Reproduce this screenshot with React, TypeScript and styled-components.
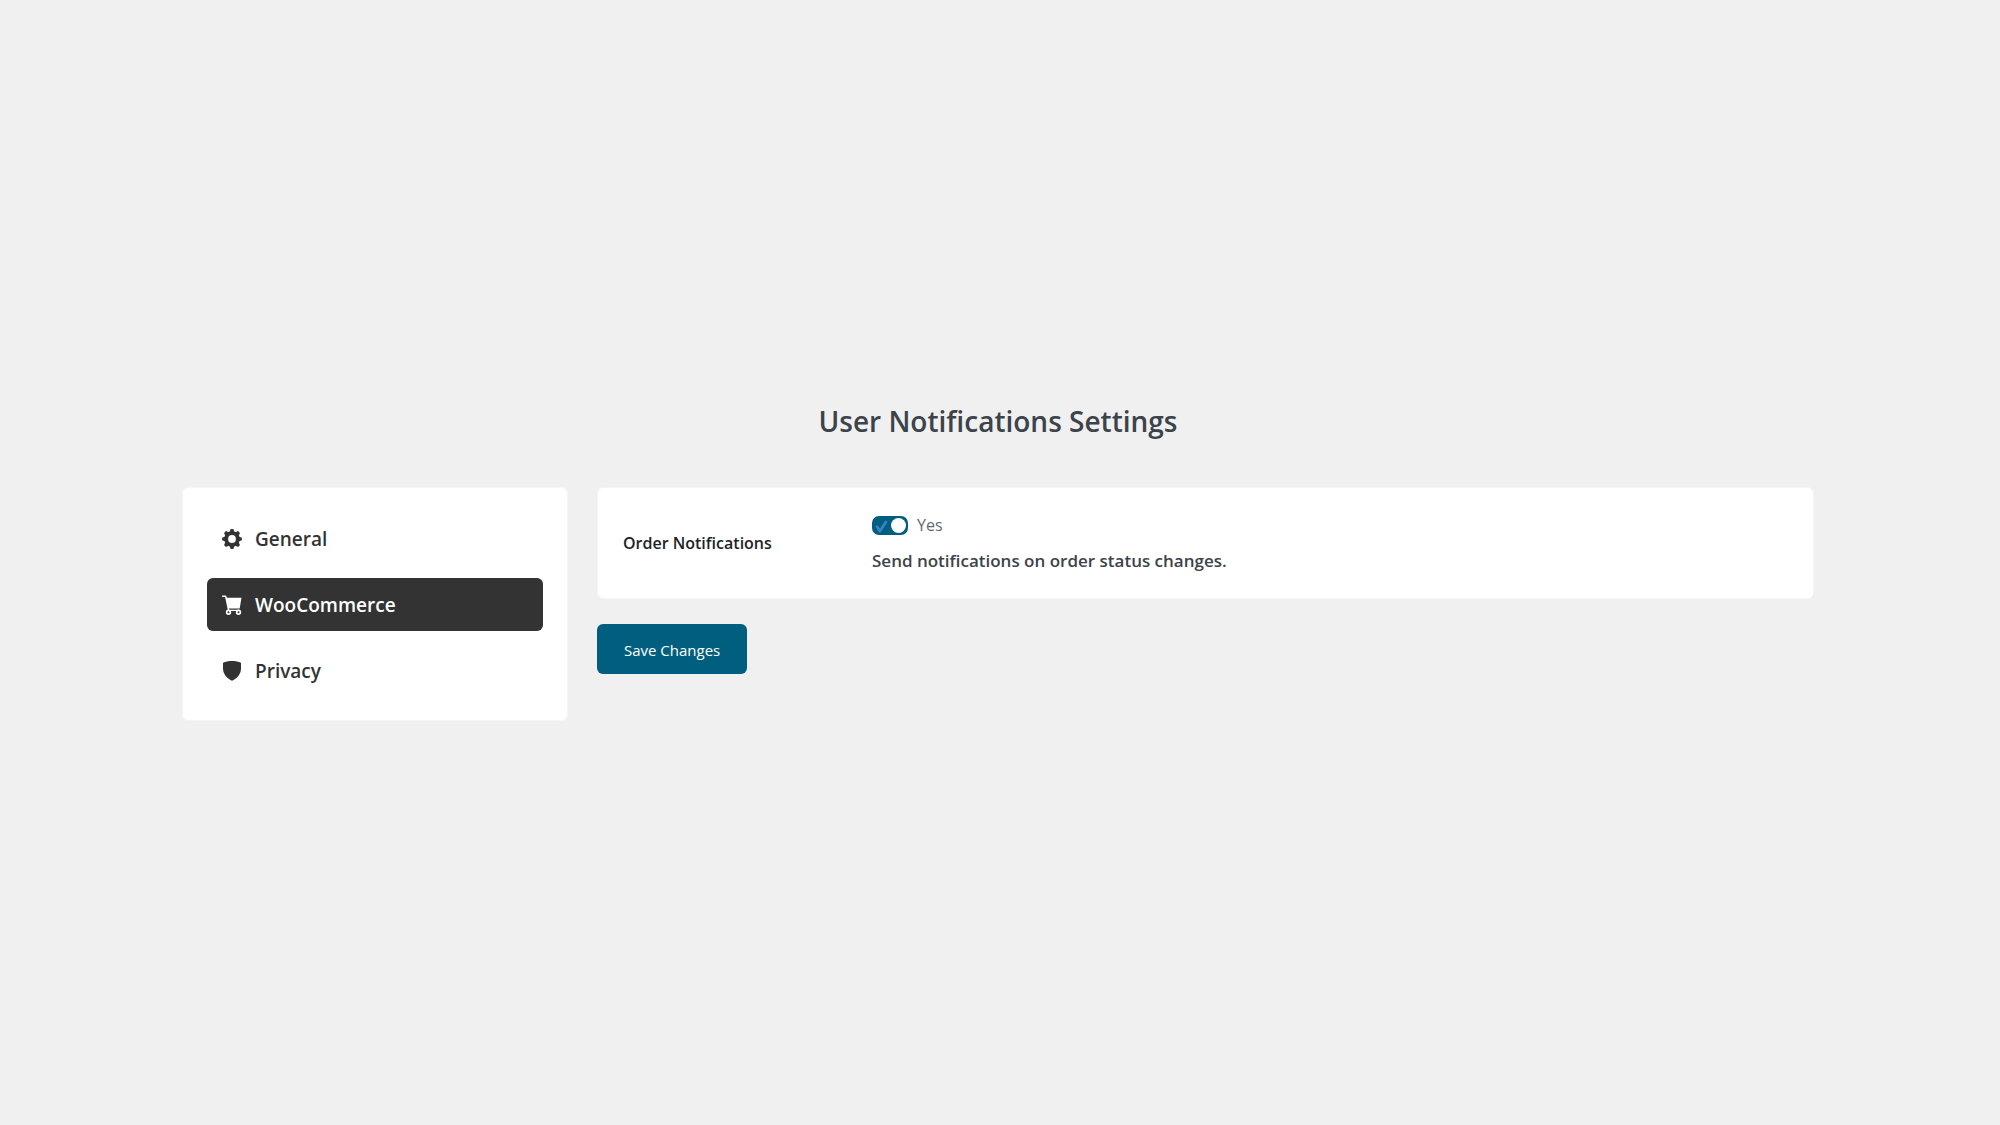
import React, { useState } from "react";
import styled, { createGlobalStyle } from "styled-components";

const GlobalStyle = createGlobalStyle`
  *, *::before, *::after { box-sizing: border-box; }
  body {
    margin: 0;
    background: #f0f0f0;
    color: #3c434a;
    font-family: "Segoe UI", "Open Sans", "Noto Sans", sans-serif;
  }
`;

const Page = styled.main`
  min-height: 100vh;
  padding: 396px 186px 48px 182px;
`;

const Title = styled.h1`
  margin: 0 0 41px;
  font-size: 28px;
  line-height: 50px;
  font-weight: 600;
  text-align: center;
`;

const Layout = styled.div`
  display: grid;
  grid-template-columns: 386px minmax(0, 1fr);
  gap: 29px;
  align-items: start;
`;

const Panel = styled.div`
  padding: 25px;
  background: #fff;
  border: 1px solid #f5f5f5;
  border-radius: 6px;
`;

const NavPanel = styled(Panel)`
  padding: 24px 24px 23px;
`;

const NavList = styled.ul`
  display: flex;
  flex-direction: column;
  gap: 13px;
  margin: 0;
  padding: 0;
  list-style: none;
`;

const NavLink = styled.a<{ $active?: boolean }>`
  display: flex;
  align-items: center;
  gap: 13px;
  height: 53px;
  padding: 0 15px;
  border-radius: 6px;
  background: ${(p) => (p.$active ? "#333" : "transparent")};
  color: ${(p) => (p.$active ? "#fff" : "#333")};
  font-size: 19px;
  line-height: 26px;
  font-weight: 600;
  text-decoration: none;
`;

const NavIcon = styled.svg`
  flex: none;
  width: 20px;
  height: 20px;
  fill: currentColor;
`;

const Form = styled.form`
  display: flex;
  flex-direction: column;
  align-items: flex-start;
  gap: 25px;
`;

const SettingRow = styled(Panel)`
  display: grid;
  grid-template-columns: 249px minmax(0, 1fr);
  align-items: center;
  width: 100%;
`;

const SettingName = styled.span`
  color: #1d2327;
  font-size: 16px;
  line-height: 24px;
  font-weight: 600;
`;

const SettingBody = styled.div`
  display: flex;
  flex-direction: column;
  gap: 12px;
`;

const ToggleLabel = styled.label`
  display: flex;
  align-items: center;
  gap: 9px;
  color: #646970;
  font-size: 16px;
  line-height: 24px;
`;

const Toggle = styled.span`
  position: relative;
  display: flex;
  width: 36px;
  height: 19px;
`;

const ToggleInput = styled.input`
  appearance: none;
  width: 36px;
  height: 19px;
  margin: 0;
  border-radius: 7px;
  background: #8c8f94;
  cursor: pointer;

  &:checked { background: #005f7f; }
  &::before {
    content: "";
    position: absolute;
    top: 2px;
    left: 2px;
    width: 15px;
    height: 15px;
    border-radius: 50%;
    background: #fff;
  }
  &:checked::before { left: 19px; }
`;

const Check = styled.svg`
  position: absolute;
  top: 3px;
  left: 2px;
  width: 15px;
  height: 15px;
  fill: #3582c4;
  pointer-events: none;
`;

const Description = styled.p`
  margin: 0;
  font-size: 17px;
  line-height: 24px;
  font-weight: 600;
`;

const SaveButton = styled.button`
  height: 50px;
  padding: 2px 27px 0;
  border: 0;
  border-radius: 6px;
  background: #005f7f;
  color: #fff;
  font-family: inherit;
  font-size: 15px;
  line-height: 24px;
  cursor: pointer;
`;

const teeth = [0, 45, 90, 135, 180, 225, 270, 315];

const GearIcon = () => (
  <NavIcon viewBox="0 0 20 20" aria-hidden="true">
    <circle cx="10" cy="10" r="5.8" fill="none" stroke="currentColor" strokeWidth="3.8" />
    {teeth.map((angle) => (
      <path key={angle} d="M7.4 3.4L8.7.1h2.6l1.3 3.3z" transform={`rotate(${angle} 10 10)`} />
    ))}
  </NavIcon>
);

const CartIcon = () => (
  <NavIcon viewBox="0 0 20 20" aria-hidden="true">
    <path d="M.5.5h2.8c.6 0 1 .3 1.2.9l.4 1.4h14.6l-1.8 10.7H6.800l.3 1.3h10.300v1.200H6L3.100 2H.5C-.2 2-.2.500.5.5z" />
    <path
      fillRule="evenodd"
      d="M6.5 14.600a2.700 2.700 0 1 1 0 5.400 2.700 2.700 0 0 1 0-5.400zm0 1.700a1 1 0 1 0 0 2 1 1 0 0 0 0-2zM16.500 14.600a2.700 2.700 0 1 1 0 5.400 2.700 2.700 0 0 1 0-5.400zm0 1.700a1 1 0 1 0 0 2 1 1 0 0 0 0-2z"
    />
  </NavIcon>
);

const ShieldIcon = () => (
  <NavIcon viewBox="0 0 20 20" aria-hidden="true">
    <path d="M10 0c3.400 0 6.400.6 9 1.700v5.700c0 5.200-3.600 9.800-9 12.400C4.600 17.200 1 12.600 1 7.400V1.700C3.600.600 6.600 0 10 0z" />
  </NavIcon>
);

const items = [
  { name: "General", Icon: GearIcon },
  { name: "WooCommerce", Icon: CartIcon },
  { name: "Privacy", Icon: ShieldIcon },
];

export default function App() {
  const [active, setActive] = useState("WooCommerce");
  const [enabled, setEnabled] = useState(true);

  return (
    <>
      <GlobalStyle />
      <Page>
        <Title>User Notifications Settings</Title>
        <Layout>
          <NavPanel as="nav">
            <NavList>
              {items.map(({ name, Icon }) => (
                <li key={name}>
                  <NavLink
                    href={`#${name.toLowerCase()}`}
                    $active={active === name}
                    aria-current={active === name ? "page" : undefined}
                    onClick={() => setActive(name)}
                  >
                    <Icon />
                    {name}
                  </NavLink>
                </li>
              ))}
            </NavList>
          </NavPanel>
          <Form onSubmit={(e) => e.preventDefault()}>
            <SettingRow role="group" aria-labelledby="order-name">
              <SettingName id="order-name">Order Notifications</SettingName>
              <SettingBody>
                <ToggleLabel htmlFor="order-toggle">
                  <Toggle>
                    <ToggleInput
                      id="order-toggle"
                      type="checkbox"
                      checked={enabled}
                      aria-describedby="order-description"
                      onChange={(e) => setEnabled(e.target.checked)}
                    />
                    {enabled && (
                      <Check viewBox="0 0 15 15" aria-hidden="true">
                        <path d="M1.300 7.200L3.800 6.200 6 9.400 11.200 1.600 13.700 2.400 6.800 13.400H5z" />
                      </Check>
                    )}
                  </Toggle>
                  Yes
                </ToggleLabel>
                <Description id="order-description">
                  Send notifications on order status changes.
                </Description>
              </SettingBody>
            </SettingRow>
            <SaveButton type="submit">Save Changes</SaveButton>
          </Form>
        </Layout>
      </Page>
    </>
  );
}
